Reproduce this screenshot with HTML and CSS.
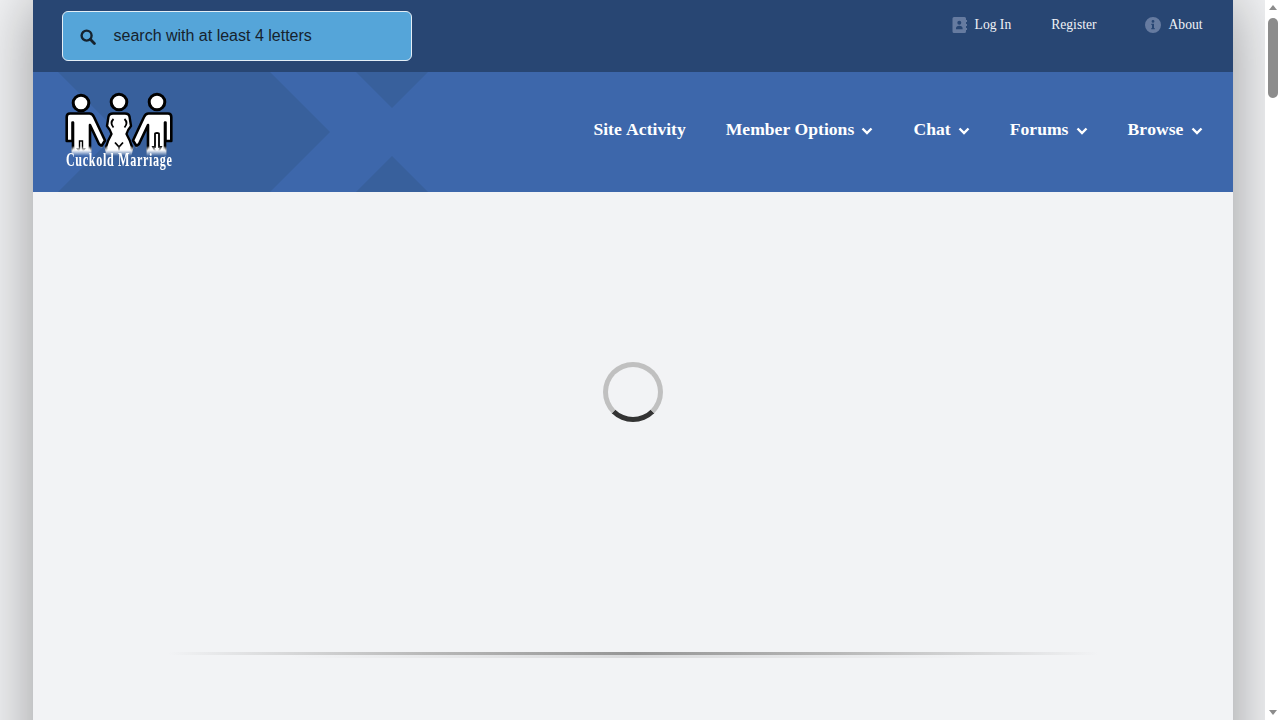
FILE: index.html
```html
<!DOCTYPE html>
<html lang="en">
<head>
<meta charset="utf-8">
<title>Cuckold Marriage</title>
<link rel="stylesheet" href="styles.css">
</head>
<body>
<div class="viewport">
<div class="page">
  <header class="topbar">
    <label class="search">
      <svg class="search-icon" viewBox="0 0 16 16"><circle cx="6.600" cy="6.600" r="5" fill="none" stroke="currentColor" stroke-width="2.400"/><path d="M10.300 10.300 14.400 14.400" stroke="currentColor" stroke-width="2.800" stroke-linecap="round"/></svg>
      <span class="search-text">search with at least 4 letters</span>
    </label>
    <nav class="toplinks">
      <a class="toplink login"><svg class="topicon" viewBox="0 0 15 16"><path fill-rule="evenodd" d="M2 0H12.500A1.500 1.500 0 0 1 14 1.500V3H15V5H14V7H15V9H14V11H15V13H14V14.500A1.500 1.500 0 0 1 12.500 16H2A1.500 1.500 0 0 1 .5 14.500V1.500A1.500 1.500 0 0 1 2 0ZM7.300 3.800A2 2 0 1 0 7.300 7.800 2 2 0 0 0 7.300 3.800ZM4 11.600V12.200H10.600V11.600C10.600 9.800 9.400 8.800 7.300 8.800S4 9.800 4 11.600Z"/></svg>Log In</a>
      <a class="toplink register">Register</a>
      <a class="toplink about"><svg class="topicon" viewBox="0 0 16 16"><path fill-rule="evenodd" d="M8 0A8 8 0 1 1 8 16 8 8 0 0 1 8 0ZM8 3A1.400 1.400 0 1 0 8 5.800 1.400 1.400 0 0 0 8 3ZM6.300 6.800V8H7V11H6.300V12.300H9.700V11H9V6.800Z"/></svg>About</a>
    </nav>
  </header>
  <div class="mainbar">
    <svg class="pattern" viewBox="0 0 1200 120" preserveAspectRatio="none">
      <path d="M25 0H237L297 60 237 120H25L85 60Z"/>
      <path d="M323 0H395L359 36Z"/>
      <path d="M359 84 395 120H323Z"/>
    </svg>
    <div class="logo">
      <svg class="logo-art" viewBox="64 92 110 68">
        <defs>
          <linearGradient id="fade" x1="0" y1="146" x2="0" y2="151" gradientUnits="userSpaceOnUse">
            <stop offset="0" stop-color="#fff" stop-opacity="0"/>
            <stop offset="1" stop-color="#fff" stop-opacity="1"/>
          </linearGradient>
          <linearGradient id="out" x1="0" y1="150" x2="0" y2="156" gradientUnits="userSpaceOnUse">
            <stop offset="0" stop-color="#fff"/>
            <stop offset="1" stop-color="#000"/>
          </linearGradient>
          <mask id="cut" maskUnits="userSpaceOnUse" x="64" y="92" width="110" height="68">
            <rect x="64" y="92" width="110" height="68" fill="url(#out)"/>
          </mask>
          <path id="woman" d="M108.500 116.500Q109 113.500 113 113.500H125Q129 113.500 129.500 116.500L131 126Q127.500 130 126.500 134Q130 140 132 147L129 160H109L106 147Q108 140 111.500 134Q110.500 130 107 126Z"/>
          <path id="man" d="M66.700 141V117Q66.700 113.500 70 113.500H89.500Q92.500 113.500 94 117L105 140.500 101.500 146 99 144 90 125V160H73V122.500H72.500V141Z"/>
          <path id="man2" d="M171.300 141V117Q171.300 113.500 168 113.500H148.500Q145.500 113.500 144 117L133 140.500 136.500 146 139 144 148 125V160H165V122.500H165.500V141Z"/>
        </defs>
        <g mask="url(#cut)">
          <use href="#woman" fill="#fff" stroke="#000" stroke-width="2.400" stroke-linejoin="round"/>
          <use href="#man" fill="#fff" stroke="#000" stroke-width="2.600" stroke-linejoin="round"/>
          <use href="#man2" fill="#fff" stroke="#000" stroke-width="2.600" stroke-linejoin="round"/>
          <circle cx="81" cy="103" r="7.800" fill="#fff" stroke="#000" stroke-width="3"/>
          <circle cx="119" cy="102" r="7.800" fill="#fff" stroke="#000" stroke-width="3"/>
          <circle cx="157" cy="102" r="7.800" fill="#fff" stroke="#000" stroke-width="3"/>
          <path d="M113.500 119Q109.500 123 113.500 127.500M124.500 119Q128.500 123 124.500 127.500" fill="none" stroke="#000" stroke-width="1.800"/>
          <path d="M115 142.500 119 147 123 142.500M119 147V152" fill="none" stroke="#000" stroke-width="1.800"/>
          <path d="M79.500 141V149H77.500L81 154 84.500 149H82.500V141Z" fill="#fff" stroke="#000" stroke-width="1.400"/>
          <path d="M155 134Q155 133 157 133 159 133 159 134V147H161L157 155 153 147H155Z" fill="#fff" stroke="#000" stroke-width="1.800"/>
          <use href="#woman" fill="url(#fade)" stroke="url(#fade)" stroke-width="3"/>
          <use href="#man" fill="url(#fade)" stroke="url(#fade)" stroke-width="3"/>
          <use href="#man2" fill="url(#fade)" stroke="url(#fade)" stroke-width="3"/>
        </g>
      </svg>
      <span class="logo-text">Cuckold Marriage</span>
    </div>
    <nav class="menu">
      <a class="menu-item">Site Activity</a>
      <a class="menu-item">Member Options<svg class="chev" viewBox="0 0 12 8"><path d="M1.500 1.500 6 6 10.500 1.500"/></svg></a>
      <a class="menu-item">Chat<svg class="chev" viewBox="0 0 12 8"><path d="M1.500 1.500 6 6 10.500 1.500"/></svg></a>
      <a class="menu-item">Forums<svg class="chev" viewBox="0 0 12 8"><path d="M1.500 1.500 6 6 10.500 1.500"/></svg></a>
      <a class="menu-item">Browse<svg class="chev" viewBox="0 0 12 8"><path d="M1.500 1.500 6 6 10.500 1.500"/></svg></a>
    </nav>
  </div>
  <main class="content">
    <div class="spinner"></div>
    <div class="divider"></div>
  </main>
</div>
</div>
<aside class="scrollbar">
  <span class="arrow-up"></span>
  <span class="thumb"></span>
  <span class="arrow-down"></span>
</aside>
</body>
</html>
```
FILE: styles.css
```css
body {
  margin: 0;
  display: flex;
  align-items: flex-start;
  background: #f2f3f5;
  font-family: "Liberation Serif", "Times New Roman", serif;
}
.viewport {
  flex: 1;
  min-width: 0;
  overflow: hidden;
}
.page {
  width: 1200px;
  margin: 0 auto;
  background: #f2f3f5;
  box-shadow: 0 0 60px rgba(0, 0, 0, 0.38);
}
.topbar {
  height: 72px;
  box-sizing: border-box;
  background: #284673;
  display: flex;
  justify-content: space-between;
  padding: 11px 30px 0 29px;
}
.search {
  width: 350px;
  height: 50px;
  box-sizing: border-box;
  display: flex;
  align-items: center;
  gap: 18px;
  padding-left: 17px;
  border: 1px solid #e4eef6;
  border-radius: 6px;
  background: #55a5d9;
  color: #15222d;
  font: 16px "Liberation Sans", Arial, sans-serif;
}
.search-icon {
  width: 16px;
  height: 16px;
  margin-top: 1px;
  flex: none;
}
.toplinks {
  display: flex;
  align-items: flex-start;
  height: 28px;
  color: #f0f2f6;
  font-size: 13.6px;
}
.toplink {
  display: flex;
  align-items: center;
  gap: 8px;
  height: 28px;
}
.register {
  margin-left: 40px;
}
.about {
  margin-left: 48px;
}
.topicon {
  width: 15px;
  height: 16px;
  fill: #667ba0;
}
.about .topicon {
  width: 16px;
}
.mainbar {
  position: relative;
  height: 120px;
  background: #3d67ab;
  display: flex;
  justify-content: space-between;
  padding: 0 30px 0 31px;
}
.pattern {
  position: absolute;
  left: 0;
  top: 0;
  width: 100%;
  height: 100%;
  fill: #38609c;
}
.logo {
  position: relative;
  width: 110px;
  height: 120px;
  display: flex;
  flex-direction: column;
  align-items: center;
}
.logo-art {
  width: 110px;
  height: 68px;
  margin-top: 20px;
  flex: none;
}
.logo-text {
  margin: -9px 0 0 1px;
  color: #fff;
  font: bold 19px/18px "Liberation Serif", serif;
  letter-spacing: 1px;
  white-space: nowrap;
  transform: scaleX(0.64);
}
.menu {
  position: relative;
  display: flex;
  gap: 40px;
  padding-top: 47px;
  color: #fff;
  font-size: 17.6px;
  font-weight: bold;
  line-height: 21px;
  font-kerning: none;
}
.menu-item {
  display: flex;
  align-items: flex-start;
  white-space: nowrap;
}
.chev {
  width: 12px;
  height: 8px;
  margin: 8px 0 0 7.2px;
  fill: none;
  stroke: #fff;
  stroke-width: 2.400;
}
.content {
  height: 6018px;
  box-sizing: border-box;
  padding-top: 170px;
}
.spinner {
  width: 60px;
  height: 60px;
  box-sizing: border-box;
  margin: 0 auto;
  border: 5px solid #c0c0c0;
  border-bottom-color: #333;
  border-radius: 50%;
}
.divider {
  position: relative;
  width: 930px;
  height: 3px;
  margin: 230px auto 0;
  background: linear-gradient(90deg, rgba(150, 150, 150, 0), #b8b8b8 28%, #969696 50%, #b8b8b8 72%, rgba(150, 150, 150, 0));
}
.divider::after {
  content: "";
  position: absolute;
  left: 120px;
  right: 120px;
  top: 3px;
  height: 3px;
  background: linear-gradient(90deg, rgba(130, 130, 130, 0), rgba(130, 130, 130, 0.22) 50%, rgba(130, 130, 130, 0));
}
.scrollbar {
  position: sticky;
  top: 0;
  flex: none;
  width: 15px;
  height: 100vh;
  box-sizing: border-box;
  background: #fff;
  display: flex;
  flex-direction: column;
  align-items: center;
  padding: 5px 0;
}
.arrow-up,
.arrow-down {
  width: 0;
  height: 0;
  border-left: 4.5px solid transparent;
  border-right: 4.5px solid transparent;
  flex: none;
}
.arrow-up {
  border-bottom: 5px solid #8c8c8c;
}
.arrow-down {
  margin-top: auto;
  border-top: 5px solid #8c8c8c;
}
.thumb {
  width: 10px;
  height: 80px;
  margin-top: 8px;
  border-radius: 5px;
  background: #8c8c8c;
  flex: none;
}
```
